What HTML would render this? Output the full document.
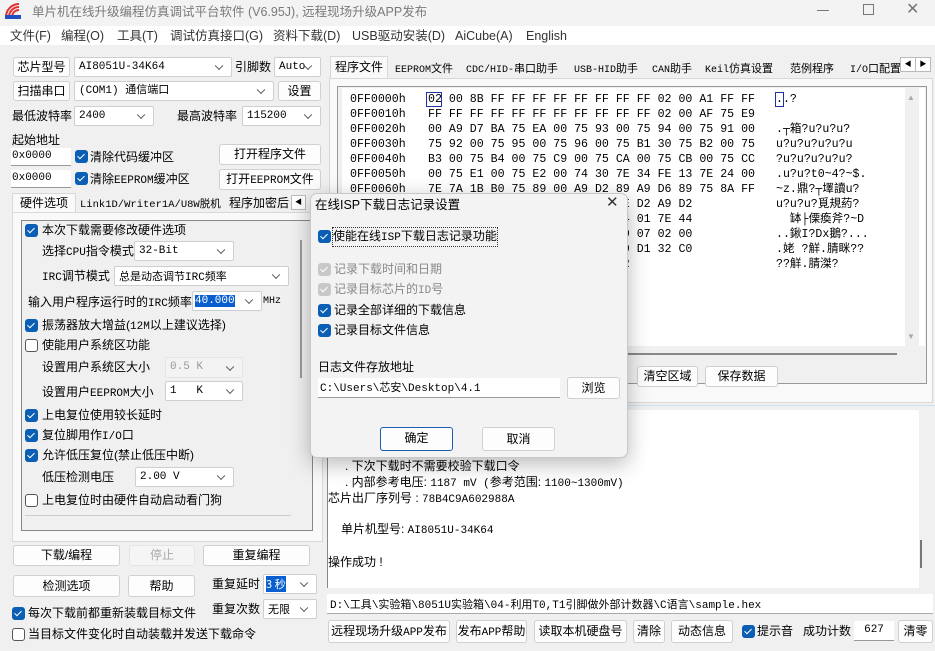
<!DOCTYPE html>
<html><head><meta charset="utf-8">
<style>
*{box-sizing:border-box;margin:0;padding:0}
body{width:935px;height:651px;overflow:hidden;background:#f0f0f0;position:relative;font-family:"Liberation Sans","Noto Sans CJK SC",sans-serif;font-size:12px;color:#000}
.a{position:absolute;white-space:nowrap;line-height:16px}
.b{position:absolute;background:#fdfdfd;border:1px solid #d0d0d0;border-radius:3px;text-align:center;white-space:nowrap;font-size:12px}
.s{position:absolute;background:#fff;border:1px solid #cfcfcf;border-radius:2px;white-space:nowrap;font-family:"Liberation Mono","Noto Sans CJK SC",monospace;font-size:11px;padding-left:4px}
.s:after{content:"";position:absolute;right:9px;top:50%;width:5px;height:5px;border-right:1px solid #555;border-bottom:1px solid #555;transform:translateY(-70%) rotate(45deg)}
.in{position:absolute;background:#fff;border-bottom:1px solid #999;white-space:nowrap;font-family:"Liberation Mono","Noto Sans CJK SC",monospace;font-size:11px}
.c{position:absolute;width:13px;height:13px;border-radius:3px;background:#0a5fb4}
.c:after{content:"";position:absolute;left:4px;top:1.5px;width:3px;height:6px;border-right:1.6px solid #fff;border-bottom:1.6px solid #fff;transform:rotate(45deg)}
.u{position:absolute;width:13px;height:13px;border-radius:3px;background:#fff;border:1px solid #555}
.d{background:#c8c8c8}
.m{font-family:"Liberation Mono","Noto Sans CJK SC",monospace;font-size:11px}
.hex{position:absolute;font-family:"Liberation Mono",monospace;font-size:11.6px;line-height:15px;white-space:pre;color:#000}
.mn{position:absolute;top:28px;font-size:12.5px;color:#333;line-height:16px;white-space:nowrap}
</style></head><body>
<div class="a" style="left:0;top:0;width:935px;height:26px;background:#f3f3f3"></div>
<svg class="a" style="left:5px;top:3px" width="16" height="16" viewBox="0 0 16 16"><path d="M1 14 A13 13 0 0 1 14 1" stroke="#e03030" stroke-width="2" fill="none"/><path d="M4 14 A10 10 0 0 1 14 4" stroke="#e03030" stroke-width="2" fill="none"/><path d="M7 14 A7 7 0 0 1 14 7" stroke="#e03030" stroke-width="2" fill="none"/><rect x="0" y="12" width="16" height="4" fill="#2050c0"/></svg>
<div class="a" style="left:32px;top:4px;font-size:12.5px;color:#7a7a7a">单片机在线升级编程仿真调试平台软件 (V6.95J), 远程现场升级APP发布</div>
<div class="a" style="left:817px;top:10px;width:12px;height:1px;background:#777"></div>
<div class="a" style="left:863px;top:4px;width:11px;height:11px;border:1px solid #777"></div>
<div class="a" style="left:906px;top:2px;font-size:16px;color:#777">✕</div>
<div class="a" style="left:0;top:26px;width:935px;height:19px;background:#fff"></div>
<div class="mn" style="left:10px">文件(F)</div>
<div class="mn" style="left:61px">编程(O)</div>
<div class="mn" style="left:117px">工具(T)</div>
<div class="mn" style="left:170px">调试仿真接口(G)</div>
<div class="mn" style="left:273px">资料下载(D)</div>
<div class="mn" style="left:352px">USB驱动安装(D)</div>
<div class="mn" style="left:455px">AiCube(A)</div>
<div class="mn" style="left:526px">English</div>

<div class="b" style="left:13px;top:57px;width:57px;height:20px;line-height:18px">芯片型号</div>
<div class="s" style="left:74px;top:57px;width:158px;height:20px;line-height:18px">AI8051U-34K64</div>
<div class="a" style="left:235px;top:59px">引脚数</div>
<div class="s" style="left:274px;top:57px;width:47px;height:20px;line-height:18px">Auto</div>
<div class="b" style="left:13px;top:81px;width:57px;height:20px;line-height:18px">扫描串口</div>
<div class="s" style="left:74px;top:81px;width:200px;height:20px;line-height:18px">(COM1) 通信端口</div>
<div class="b" style="left:278px;top:81px;width:43px;height:20px;line-height:18px">设置</div>
<div class="a" style="left:12px;top:108px">最低波特率</div>
<div class="s" style="left:74px;top:106px;width:80px;height:20px;line-height:18px">2400</div>
<div class="a" style="left:177px;top:108px">最高波特率</div>
<div class="s" style="left:242px;top:106px;width:79px;height:20px;line-height:18px">115200</div>
<div class="a" style="left:12px;top:132px">起始地址</div>
<div class="in" style="left:11px;top:148px;width:60px;height:18px;line-height:17px;padding-left:1px">0x0000</div>
<div class="c" style="left:75px;top:150px"></div><div class="a" style="left:90px;top:149px">清除代码缓冲区</div>
<div class="b" style="left:219px;top:144px;width:102px;height:21px;line-height:19px">打开程序文件</div>
<div class="in" style="left:11px;top:170px;width:60px;height:18px;line-height:17px;padding-left:1px">0x0000</div>
<div class="c" style="left:75px;top:172px"></div><div class="a" style="left:90px;top:171px">清除<span class="m">EEPROM</span>缓冲区</div>
<div class="b" style="left:219px;top:169px;width:102px;height:21px;line-height:19px">打开<span class="m">EEPROM</span>文件</div>
<div class="a" style="left:12px;top:193px;width:64px;height:20px;background:#f9f9f9;border:1px solid #d8d8d8;border-bottom:none"></div>
<div class="a" style="left:20px;top:195px">硬件选项</div>
<div class="a m" style="left:80px;top:196px;font-size:10.5px">Link1D/Writer1A/U8W<span style="font-family:'Noto Sans CJK SC'">脱机</span></div>
<div class="a" style="left:229px;top:195px;width:60px;overflow:hidden">程序加密后</div>
<div class="a" style="left:291px;top:195px;width:15px;height:15px;border:1px solid #bbb;background:#fff;font-size:7px;line-height:13px;text-align:center">◀</div>
<div class="a" style="left:12px;top:212px;width:311px;height:330px;border:1px solid #d8d8d8;background:#f9f9f9"></div>
<div class="a" style="left:21px;top:220px;width:292px;height:311px;border:1px solid #888;background:#f0f0f0"></div>
<div class="a" style="left:300px;top:240px;width:2px;height:138px;background:#999"></div>
<div class="c" style="left:25px;top:224px"></div><div class="a" style="left:42px;top:222px">本次下载需要修改硬件选项</div>
<div class="a" style="left:42px;top:243px">选择<span class="m">CPU</span>指令模式</div>
<div class="s" style="left:134px;top:241px;width:100px;height:20px;line-height:18px">32-Bit</div>
<div class="a" style="left:42px;top:268px"><span class="m">IRC</span>调节模式</div>
<div class="s" style="left:114px;top:266px;width:175px;height:20px;line-height:18px;font-family:'Noto Sans CJK SC'">总是动态调节<span class="m">IRC</span>频率</div>
<div class="a" style="left:28px;top:294px">输入用户程序运行时的<span class="m">IRC</span>频率</div>
<div class="s" style="left:192px;top:291px;width:70px;height:20px;line-height:18px;padding-left:2px"><span style="background:#0a5fd0;color:#fff">40.000</span></div>
<div class="a m" style="left:263px;top:294px;font-size:10px">MHz</div>
<div class="c" style="left:25px;top:319px"></div><div class="a" style="left:42px;top:317px">振荡器放大增益(<span class="m">12M</span>以上建议选择)</div>
<div class="u" style="left:25px;top:339px"></div><div class="a" style="left:42px;top:337px">使能用户系统区功能</div>
<div class="a" style="left:42px;top:359px">设置用户系统区大小</div>
<div class="s" style="left:165px;top:357px;width:78px;height:21px;line-height:19px;background:#f3f3f3;border-color:#e5e5e5;color:#999">0.5 K</div>
<div class="a" style="left:42px;top:384px">设置用户<span class="m">EEPROM</span>大小</div>
<div class="s" style="left:165px;top:381px;width:78px;height:20px;line-height:18px">1&nbsp;&nbsp;&nbsp;K</div>
<div class="c" style="left:25px;top:409px"></div><div class="a" style="left:42px;top:407px">上电复位使用较长延时</div>
<div class="c" style="left:25px;top:429px"></div><div class="a" style="left:42px;top:427px">复位脚用作<span class="m">I/O</span>口</div>
<div class="c" style="left:25px;top:449px"></div><div class="a" style="left:42px;top:447px">允许低压复位(禁止低压中断)</div>
<div class="a" style="left:42px;top:469px">低压检测电压</div>
<div class="s" style="left:135px;top:467px;width:99px;height:20px;line-height:18px">2.00 V</div>
<div class="u" style="left:25px;top:494px"></div><div class="a" style="left:42px;top:492px">上电复位时由硬件自动启动看门狗</div>
<div class="a" style="left:25px;top:515px;width:266px;height:1px;background:#ccc"></div>
<div class="b" style="left:13px;top:545px;width:107px;height:21px;line-height:19px">下载/编程</div>
<div class="b" style="left:129px;top:545px;width:66px;height:21px;line-height:19px;color:#aaa;background:#f5f5f5;border-color:#e5e5e5">停止</div>
<div class="b" style="left:203px;top:545px;width:107px;height:21px;line-height:19px">重复编程</div>
<div class="b" style="left:13px;top:575px;width:107px;height:22px;line-height:20px">检测选项</div>
<div class="b" style="left:128px;top:575px;width:67px;height:22px;line-height:20px">帮助</div>
<div class="a" style="left:212px;top:576px">重复延时</div>
<div class="s" style="left:263px;top:574px;width:54px;height:20px;line-height:18px;padding-left:2px;font-family:'Noto Sans CJK SC'"><span style="background:#0a5fd0;color:#fff">3 秒</span></div>
<div class="a" style="left:212px;top:601px">重复次数</div>
<div class="s" style="left:263px;top:599px;width:54px;height:20px;line-height:18px;font-family:'Noto Sans CJK SC'">无限</div>
<div class="c" style="left:12px;top:607px"></div><div class="a" style="left:28px;top:605px">每次下载前都重新装载目标文件</div>
<div class="u" style="left:12px;top:628px"></div><div class="a" style="left:28px;top:626px">当目标文件变化时自动装载并发送下载命令</div>

<div class="a" style="left:330px;top:56px;width:58px;height:23px;background:#f9f9f9;border:1px solid #d8d8d8;border-bottom:none"></div>
<div class="a" style="left:335px;top:59px">程序文件</div>
<div class="a" style="left:395px;top:61px;font-size:11px"><span class="m" style="font-size:10px">EEPROM</span>文件</div>
<div class="a" style="left:466px;top:61px;font-size:11px"><span class="m" style="font-size:10px">CDC/HID-</span>串口助手</div>
<div class="a" style="left:574px;top:61px;font-size:11px"><span class="m" style="font-size:10px">USB-HID</span>助手</div>
<div class="a" style="left:652px;top:61px;font-size:11px"><span class="m" style="font-size:10px">CAN</span>助手</div>
<div class="a" style="left:705px;top:61px;font-size:11px"><span class="m" style="font-size:10px">Keil</span>仿真设置</div>
<div class="a" style="left:790px;top:61px;font-size:11px">范例程序</div>
<div class="a" style="left:850px;top:61px;font-size:11px;width:50px;overflow:hidden"><span class="m" style="font-size:10px">I/O</span>口配置</div>
<div class="a" style="left:900px;top:57px;width:16px;height:15px;border:1px solid #bbb;background:#fff;font-size:7px;line-height:13px;text-align:center">◀</div>
<div class="a" style="left:915px;top:57px;width:16px;height:15px;border:1px solid #bbb;background:#fff;font-size:7px;line-height:13px;text-align:center">▶</div>
<div class="a" style="left:329px;top:78px;width:604px;height:325px;background:#f9f9f9;border:1px solid #d8d8d8"></div>
<div class="a" style="left:337px;top:86px;width:590px;height:298px;border:1px solid #999;background:#f0f0f0"></div>
<div class="a" style="left:342px;top:88px;width:583px;height:258px;background:#fff"></div>
<div class="a" style="left:905px;top:88px;width:14px;height:258px;background:#f0f0f0"></div>
<div class="a" style="left:907px;top:90px;font-size:8px;color:#aaa">▲</div>
<div class="a" style="left:907px;top:329px;font-size:8px;color:#aaa">▼</div>
<div class="a" style="left:342px;top:353px;width:555px;height:2px;background:#888"></div>
<div class="hex" style="left:350px;top:92px">0FF0000h
0FF0010h
0FF0020h
0FF0030h
0FF0040h
0FF0050h
0FF0060h</div>
<div class="hex" style="left:428px;top:92px">02 00 8B FF FF FF FF FF FF FF FF 02 00 A1 FF FF
FF FF FF FF FF FF FF FF FF FF FF 02 00 AF 75 E9
00 A9 D7 BA 75 EA 00 75 93 00 75 94 00 75 91 00
75 92 00 75 95 00 75 96 00 75 B1 30 75 B2 00 75
B3 00 75 B4 00 75 C9 00 75 CA 00 75 CB 00 75 CC
00 75 E1 00 75 E2 00 74 30 7E 34 FE 13 7E 24 00
7E 7A 1B B0 75 89 00 A9 D2 89 A9 D6 89 75 8A FF
                     8C D2 8E D2 A9 D2
                     FE 75 84 01 7E 44
                     7E F8 00 07 02 00
                     92 C3 D0 D1 32 C0
                     D0 D1 32</div>
<div class="a" style="left:426px;top:92px;width:16px;height:15px;border:1px solid #2030a0"></div>
<div class="hex" style="left:776px;top:92px;font-family:'Liberation Mono','Noto Sans CJK SC',monospace">..?

.┬箱?u?u?u?
u?u?u?u?u?u
?u?u?u?u?u?
.u?u?t0~4?~$.
~z.鼎?┬墿讀u?
u?u?u?覓規葯?
  缽├傈瘓斧?~D
..鍬I?Dx鵝?...
.姥 ?觧.腈眯??
??觧.腈滐?</div>
<div class="a" style="left:775px;top:92px;width:9px;height:15px;border:1px solid #2030a0"></div>
<div class="b" style="left:637px;top:366px;width:61px;height:21px;line-height:19px">清空区域</div>
<div class="b" style="left:705px;top:366px;width:73px;height:21px;line-height:19px">保存数据</div>
<div class="a" style="left:329px;top:405px;width:606px;height:1px;background:#cde0f0"></div>
<div class="a" style="left:327px;top:410px;width:592px;height:178px;background:#fff;border-left:1px solid #888"></div>
<div class="a" style="left:920px;top:540px;width:2px;height:28px;background:#777"></div>
<div class="a" style="left:345px;top:458px">. 下次下载时不需要校验下载口令</div>
<div class="a" style="left:345px;top:474px">. 内部参考电压: <span class="m">1187 mV (</span>参考范围: <span class="m">1100~1300mV)</span></div>
<div class="a" style="left:328px;top:490px">芯片出厂序列号 : <span class="m">78B4C9A602988A</span></div>
<div class="a" style="left:341px;top:521px">单片机型号: <span class="m">AI8051U-34K64</span></div>
<div class="a" style="left:328px;top:554px">操作成功 !</div>
<div class="a" style="left:327px;top:594px;width:606px;height:20px;background:#fff;border-bottom:1px solid #aaa"></div>
<div class="a m" style="left:330px;top:596px">D:\<span style="font-family:'Noto Sans CJK SC'">工具</span>\<span style="font-family:'Noto Sans CJK SC'">实验箱</span>\8051U<span style="font-family:'Noto Sans CJK SC'">实验箱</span>\04-<span style="font-family:'Noto Sans CJK SC'">利用</span>T0,T1<span style="font-family:'Noto Sans CJK SC'">引脚做外部计数器</span>\C<span style="font-family:'Noto Sans CJK SC'">语言</span>\sample.hex</div>
<div class="b" style="left:328px;top:620px;width:122px;height:23px;line-height:21px">远程现场升级<span class="m">APP</span>发布</div>
<div class="b" style="left:456px;top:620px;width:71px;height:23px;line-height:21px">发布<span class="m">APP</span>帮助</div>
<div class="b" style="left:534px;top:620px;width:93px;height:23px;line-height:21px">读取本机硬盘号</div>
<div class="b" style="left:633px;top:620px;width:32px;height:23px;line-height:21px">清除</div>
<div class="b" style="left:671px;top:620px;width:62px;height:23px;line-height:21px">动态信息</div>
<div class="c" style="left:742px;top:625px"></div><div class="a" style="left:757px;top:623px">提示音</div>
<div class="a" style="left:803px;top:623px">成功计数</div>
<div class="in" style="left:854px;top:621px;width:40px;height:20px;line-height:19px;text-align:center">627</div>
<div class="b" style="left:898px;top:620px;width:35px;height:23px;line-height:21px">清零</div>

<div class="a" style="left:310px;top:193px;width:318px;height:265px;background:#f3f3f3;border:1px solid #c8c8c8;border-radius:7px;box-shadow:0 6px 22px rgba(0,0,0,.28)"></div>
<div class="a" style="left:315px;top:197px;font-size:12.5px">在线ISP下载日志记录设置</div>
<div class="a" style="left:606px;top:195px;font-size:15px;color:#333">✕</div>
<div class="c" style="left:318px;top:230px"></div>
<div class="a" style="left:333px;top:228px;outline:1px dotted #333">使能在线<span class="m">ISP</span>下载日志记录功能</div>
<div class="c d" style="left:318px;top:263px"></div><div class="a" style="left:334px;top:261px;color:#888">记录下载时间和日期</div>
<div class="c d" style="left:318px;top:283px"></div><div class="a" style="left:334px;top:281px;color:#888">记录目标芯片的<span class="m">ID</span>号</div>
<div class="c" style="left:318px;top:304px"></div><div class="a" style="left:334px;top:302px">记录全部详细的下载信息</div>
<div class="c" style="left:318px;top:324px"></div><div class="a" style="left:334px;top:322px">记录目标文件信息</div>
<div class="a" style="left:318px;top:359px">日志文件存放地址</div>
<div class="in" style="left:318px;top:378px;width:242px;height:20px;line-height:19px;padding-left:2px">C:\Users\<span style="font-family:'Noto Sans CJK SC'">芯安</span>\Desktop\4.1</div>
<div class="b" style="left:567px;top:377px;width:53px;height:22px;line-height:20px">浏览</div>
<div class="b" style="left:380px;top:427px;width:73px;height:24px;line-height:21px;border:1.5px solid #1a5fb4">确定</div>
<div class="b" style="left:482px;top:427px;width:73px;height:24px;line-height:22px">取消</div>
</body></html>
